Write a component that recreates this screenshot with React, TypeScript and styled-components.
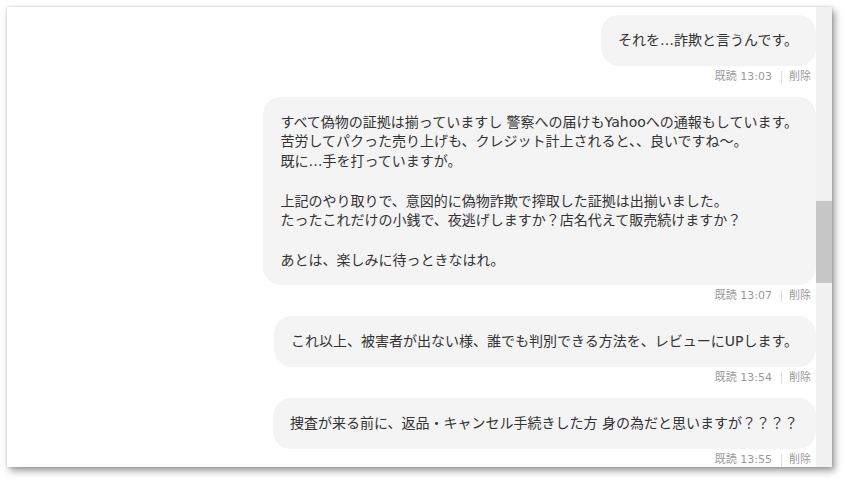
import React from "react";
import styled, { createGlobalStyle } from "styled-components";

const GlobalStyle = createGlobalStyle`
  html, body {
    margin: 0;
    padding: 0;
    background: #ffffff;
    width: 845px;
    height: 481px;
    overflow: hidden;
  }
  body {
    font-family: "DejaVu Sans", "Noto Sans CJK JP", sans-serif;
  }
`;

const Stage = styled.div`
  padding: 7px 0 0 7px;
`;

const Window = styled.div`
  width: 825px;
  height: 460px;
  background: #ffffff;
  display: flex;
  box-shadow: 3px 4px 7px rgba(0, 0, 0, 0.38), 0 0 3px rgba(0, 0, 0, 0.18);
  overflow: hidden;
`;

const MessageList = styled.div`
  flex: 1;
  display: flex;
  flex-direction: column;
  align-items: flex-end;
  padding-top: 8px;
  overflow: hidden;
`;

const MessageBlock = styled.div`
  display: flex;
  flex-direction: column;
  align-items: flex-end;
  margin-bottom: 12px;
`;

const Bubble = styled.div`
  background: #f4f4f4;
  color: #333333;
  border-radius: 18px;
  padding: 16px 18px 15px 17px;
  font-size: 14px;
  line-height: 19.7px;
  white-space: pre;
`;

const Meta = styled.div`
  display: flex;
  align-items: center;
  margin-top: 3px;
  padding-right: 5px;
  height: 16px;
  font-size: 11px;
  line-height: 16px;
  color: #9a9a9a;
`;

const Separator = styled.span`
  display: inline-block;
  width: 1px;
  height: 12px;
  background: #dddddd;
  margin: 0 7px 0 9px;
`;

const Scrollbar = styled.div`
  width: 16px;
  background: #f1f1f1;
  display: flex;
  flex-direction: column;
`;

const Thumb = styled.div<{ $offset: number; $size: number }>`
  margin-top: ${(p) => p.$offset}px;
  height: ${(p) => p.$size}px;
  background: #c6c6c6;
`;

type Message = { text: string; time: string };

const messages: Message[] = [
  { text: "それを…詐欺と言うんです。", time: "13:03" },
  {
    text:
      "すべて偽物の証拠は揃っていますし 警察への届けもYahooへの通報もしています。\n" +
      "苦労してパクった売り上げも、クレジット計上されると、、良いですね～。\n" +
      "既に…手を打っていますが。\n" +
      "\n" +
      "上記のやり取りで、意図的に偽物詐欺で搾取した証拠は出揃いました。\n" +
      "たったこれだけの小銭で、夜逃げしますか？店名代えて販売続けますか？\n" +
      "\n" +
      "あとは、楽しみに待っときなはれ。",
    time: "13:07",
  },
  {
    text: "これ以上、被害者が出ない様、誰でも判別できる方法を、レビューにUPします。",
    time: "13:54",
  },
  {
    text: "捜査が来る前に、返品・キャンセル手続きした方 身の為だと思いますが？？？？",
    time: "13:55",
  },
];

export default function App() {
  return (
    <>
      <GlobalStyle />
      <Stage>
        <Window>
          <MessageList>
            {messages.map((m, i) => (
              <MessageBlock key={i}>
                <Bubble>{m.text}</Bubble>
                <Meta>
                  <span>既読 {m.time}</span>
                  <Separator />
                  <span>削除</span>
                </Meta>
              </MessageBlock>
            ))}
          </MessageList>
          <Scrollbar>
            <Thumb $offset={194} $size={82} />
          </Scrollbar>
        </Window>
      </Stage>
    </>
  );
}
